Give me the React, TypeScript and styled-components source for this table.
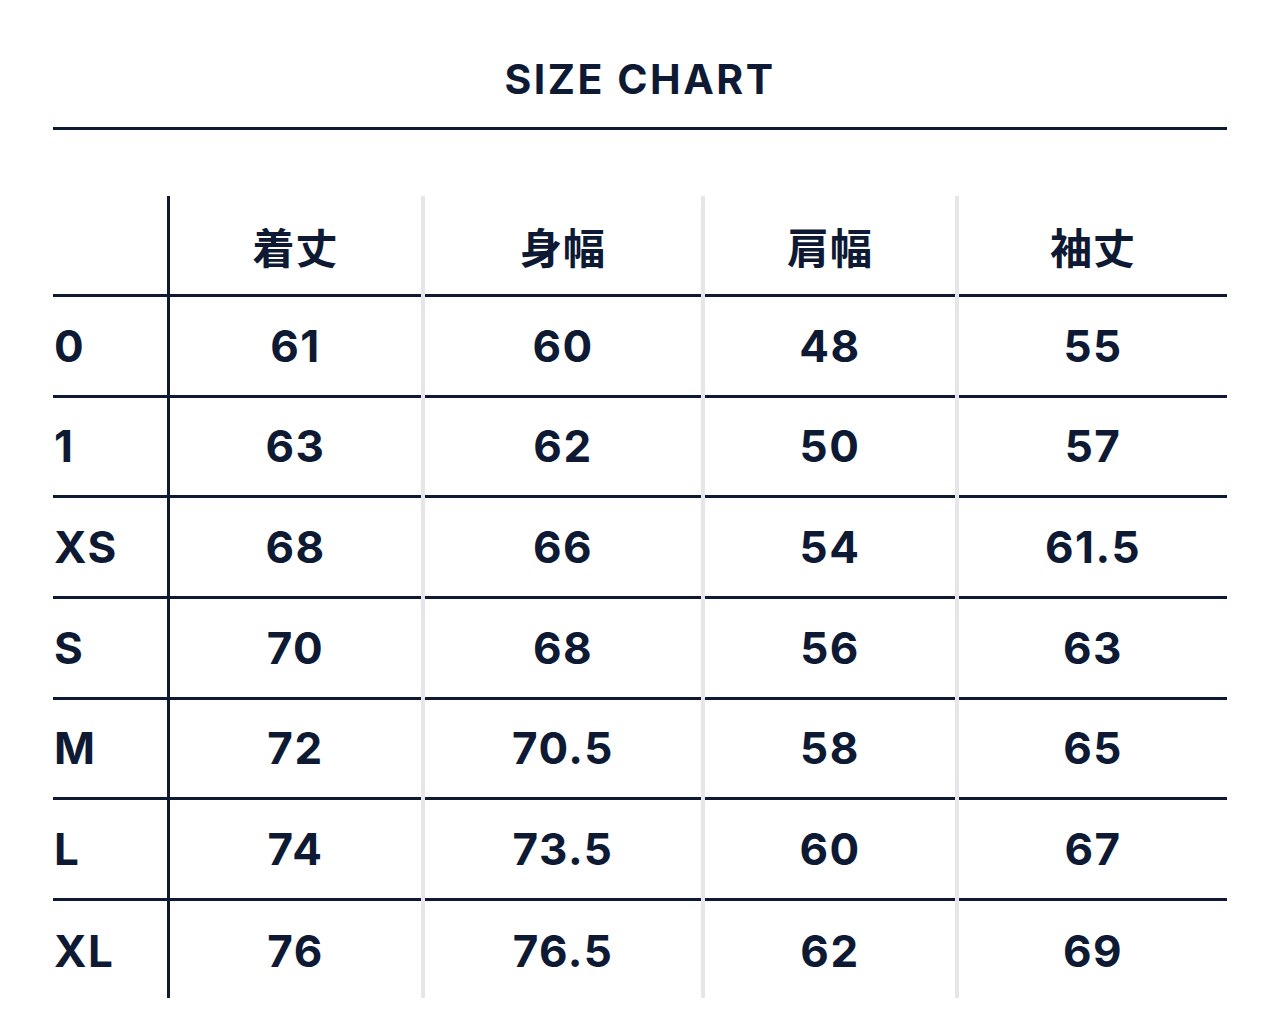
import React from 'react';
import styled, { createGlobalStyle } from 'styled-components';

const NAVY = '#0e1a33';
const GRAY = '#e6e6ea';

const GlobalStyle = createGlobalStyle`
  html, body {
    margin: 0;
    padding: 0;
    background: #ffffff;
  }
  body {
    font-family: Inter, "Noto Sans CJK JP", sans-serif;
    color: ${NAVY};
  }
`;

const Page = styled.main`
  width: 1280px;
  padding: 0 53px;
  box-sizing: border-box;
`;

const Title = styled.h1`
  margin: 0;
  padding-top: 55px;
  height: 130px;
  box-sizing: border-box;
  display: flex;
  align-items: flex-start;
  justify-content: center;
  font-size: 41px;
  line-height: 48px;
  font-weight: 700;
  letter-spacing: 2.5px;
  border-bottom: 3px solid ${NAVY};
`;

const Chart = styled.div`
  display: flex;
  margin-top: 66px;
`;

const Column = styled.div<{ $width: number; $divider?: 'navy' | 'gray' }>`
  width: ${({ $width }) => $width}px;
  box-sizing: border-box;
  flex: none;
  display: flex;
  flex-direction: column;
  border-left: ${({ $divider }) =>
    $divider === 'navy' ? `3px solid ${NAVY}` : $divider === 'gray' ? `4px solid ${GRAY}` : 'none'};
`;

const Cell = styled.div<{ $head?: boolean; $last?: boolean; $label?: boolean }>`
  box-sizing: border-box;
  height: ${({ $head, $last }) => ($head ? 101 : $last ? 97.5 : 100.67)}px;
  border-bottom: ${({ $last }) => ($last ? 'none' : `3.5px solid ${NAVY}`)};
  display: flex;
  align-items: center;
  justify-content: ${({ $label }) => ($label ? 'flex-start' : 'center')};
  padding-left: ${({ $label }) => ($label ? '1px' : '0')};
  padding-top: ${({ $last }) => ($last ? '3px' : '0')};
  font-size: ${({ $head }) => ($head ? 42 : 44)}px;
  font-weight: 700;
  letter-spacing: ${({ $head }) => ($head ? 1 : 1.5)}px;
  font-family: ${({ $head }) =>
    $head ? '"Noto Sans CJK JP", sans-serif' : 'Inter, sans-serif'};
`;

const sizes = ['0', '1', 'XS', 'S', 'M', 'L', 'XL'];

const columns: { head: string; width: number; values: string[] }[] = [
  { head: '着丈', width: 251, values: ['61', '63', '68', '70', '72', '74', '76'] },
  { head: '身幅', width: 276, values: ['60', '62', '66', '68', '70.5', '73.5', '76.5'] },
  { head: '肩幅', width: 250, values: ['48', '50', '54', '56', '58', '60', '62'] },
  { head: '袖丈', width: 268, values: ['55', '57', '61.5', '63', '65', '67', '69'] },
];

export default function App() {
  return (
    <>
      <GlobalStyle />
      <Page>
        <Title>SIZE CHART</Title>
        <Chart>
          <Column $width={114}>
            <Cell $head $label />
            {sizes.map((s, i) => (
              <Cell key={s} $label $last={i === sizes.length - 1}>
                {s}
              </Cell>
            ))}
          </Column>
          {columns.map((col, ci) => (
            <Column key={col.head} $width={col.width + (ci === 0 ? 3 : 4)} $divider={ci === 0 ? 'navy' : 'gray'}>
              <Cell $head>{col.head}</Cell>
              {col.values.map((v, i) => (
                <Cell key={i} $last={i === col.values.length - 1}>
                  {v}
                </Cell>
              ))}
            </Column>
          ))}
        </Chart>
      </Page>
    </>
  );
}
